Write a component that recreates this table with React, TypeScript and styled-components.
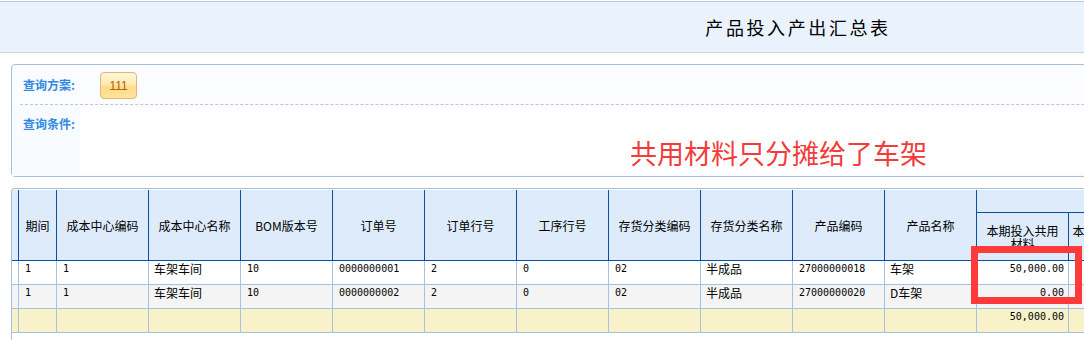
import styled, { createGlobalStyle } from 'styled-components';

type Column = {
  key: string,
  title: string,
  width: number,
  mono?: boolean,
  right?: boolean,
  pad?: number
}

const GlobalStyle = createGlobalStyle`
  * { box-sizing: border-box; }
  html, body {
    margin: 0;
    background: #fff;
    overflow: hidden;
  }
  body {
    font-family: "Noto Sans CJK SC", "DejaVu Sans", sans-serif;
    font-size: 12px;
    color: #000;
  }
`;

const Page = styled.div`
  width: 1596px;
  padding-top: 1px;
`;

const TitleBar = styled.div`
  height: 52px;
  border-top: 1px solid #b8c9dd;
  border-bottom: 1px solid #c8d3e1;
  background: #eaf2fd;
  display: flex;
  align-items: center;
  justify-content: center;
`;

const Title = styled.h1`
  margin: 0;
  font-size: 18px;
  font-weight: normal;
  letter-spacing: 2.6px;
  color: #000;
`;

const QueryPanel = styled.div`
  margin: 11px 0 0 11px;
  height: 113px;
  border: 1px solid #a8bfd8;
  border-radius: 4px 0 0 4px;
  background: #fafcff;
  display: flex;
  flex-direction: column;
`;

const SchemeRow = styled.div`
  height: 39px;
  display: flex;
  align-items: center;
  padding-left: 11px;
`;

const Label = styled.span`
  width: 77px;
  font-weight: bold;
  font-size: 12px;
  color: #338ae2;
`;

const SchemeButton = styled.button`
  width: 37px;
  height: 27px;
  margin-top: 2px;
  padding: 0;
  border: 1px solid #d9b97c;
  border-radius: 4px;
  background: linear-gradient(#fff6d6 0%, #ffeab0 45%, #ffdc88 55%, #ffe29c 100%);
  color: #b85c00;
  font-family: "Liberation Sans", sans-serif;
  font-size: 12px;
`;

const Divider = styled.div`
  margin-left: 8px;
  border-top: 1px dashed #c4c6ce;
`;

const ConditionRow = styled.div`
  flex: 1;
  display: flex;
`;

const ConditionLabel = styled.div`
  width: 68px;
  padding: 10px 0 0 11px;
  background: #f8fbff;
`;

const ConditionArea = styled.div`
  position: relative;
  flex: 1;
  margin: 3px 0 4px 0;
  background: #fff;
`;

const Annotation = styled.div`
  position: absolute;
  left: 550px;
  top: 30px;
  font-size: 27px;
  line-height: 30px;
  color: #f23c3c;
  white-space: nowrap;
`;

const TableBox = styled.div`
  position: relative;
  margin: 11px 0 0 11px;
  min-height: 160px;
  padding-top: 1px;
  border-top: 1px solid #a8c0dc;
  border-left: 1px solid #a8c0dc;
  border-top-left-radius: 4px;
`;

const Grid = styled.table`
  border-collapse: separate;
  border-spacing: 0;
  table-layout: fixed;
`;

const Col = styled.col<{ $w: number }>`
  width: ${p => p.$w}px;
`;

const Th = styled.th<{ $h?: number, $pad?: number }>`
  height: ${p => p.$h ?? 23}px;
  padding: 0 ${p => p.$pad ?? 3}px;
  background: #deebfb;
  border-right: 1px solid #0c4ea3;
  border-bottom: 1px solid #0c4ea3;
  font-weight: normal;
  font-size: 12px;
  line-height: 13px;
  text-align: center;
  vertical-align: middle;
  overflow: hidden;
`;

const Tr = styled.tr<{ $bg: string }>`
  background: ${p => p.$bg};
`;

const Td = styled.td<{ $mono?: boolean, $right?: boolean }>`
  height: 24px;
  padding: 0 ${p => (p.$right ? 4 : 5)}px 0 ${p => (p.$mono ? 6 : 5)}px;
  border-right: 1px solid #a9c0e0;
  border-bottom: 1px solid #a9c0e0;
  vertical-align: top;
  line-height: 16px;
  white-space: nowrap;
  overflow: hidden;
  text-align: ${p => (p.$right ? 'right' : 'left')};
  font-family: ${p => (p.$mono ? '"DejaVu Sans Mono", monospace' : '"Noto Sans CJK SC", sans-serif')};
  font-size: ${p => (p.$mono ? 10 : 12)}px;
`;

const MarkerCell = styled.td`
  padding: 0;
  border-right: 1px solid #a9c0e0;
  border-bottom: 1px solid #a9c0e0;
`;

const MarkerHead = styled.th`
  padding: 0;
  background: #deebfb;
  border-right: 1px solid #0c4ea3;
  border-bottom: 1px solid #0c4ea3;
`;

const Highlight = styled.div`
  position: absolute;
  left: 959px;
  top: 57px;
  width: 111px;
  height: 58px;
  border: 7px solid #ff3a3a;
  pointer-events: none;
`;

const columns: Column[] = [
  { key: 'period', title: '期间', width: 38, mono: true },
  { key: 'ccCode', title: '成本中心编码', width: 92, mono: true },
  { key: 'ccName', title: '成本中心名称', width: 92 },
  { key: 'bom', title: 'BOM版本号', width: 92, mono: true },
  { key: 'order', title: '订单号', width: 92, mono: true },
  { key: 'orderLine', title: '订单行号', width: 92, mono: true },
  { key: 'process', title: '工序行号', width: 92, mono: true },
  { key: 'catCode', title: '存货分类编码', width: 92, mono: true },
  { key: 'catName', title: '存货分类名称', width: 92 },
  { key: 'prodCode', title: '产品编码', width: 92, mono: true },
  { key: 'prodName', title: '产品名称', width: 92 },
];

const groupColumns: Column[] = [
  { key: 'shared', title: '本期投入共用材料', width: 92, mono: true, right: true, pad: 8 },
  { key: 'direct', title: '本期投入直接材料费', width: 92, mono: true, right: true },
  { key: 'total', title: '本期投入合计', width: 92, mono: true, right: true },
];

const rows: Record<string, string>[] = [
  { period: '1', ccCode: '1', ccName: '车架车间', bom: '10', order: '0000000001', orderLine: '2', process: '0', catCode: '02', catName: '半成品', prodCode: '27000000018', prodName: '车架', shared: '50,000.00', direct: '', total: '' },
  { period: '1', ccCode: '1', ccName: '车架车间', bom: '10', order: '0000000002', orderLine: '2', process: '0', catCode: '02', catName: '半成品', prodCode: '27000000020', prodName: 'D车架', shared: '0.00', direct: '', total: '' },
];

const totals: Record<string, string> = { shared: '50,000.00' };

const allColumns = [...columns, ...groupColumns];

export default function App() {
  return (
    <Page>
      <GlobalStyle />
      <TitleBar>
        <Title>产品投入产出汇总表</Title>
      </TitleBar>

      <QueryPanel>
        <SchemeRow>
          <Label>查询方案:</Label>
          <SchemeButton>111</SchemeButton>
        </SchemeRow>
        <Divider />
        <ConditionRow>
          <ConditionLabel>
            <Label>查询条件:</Label>
          </ConditionLabel>
          <ConditionArea>
            <Annotation>共用材料只分摊给了车架</Annotation>
          </ConditionArea>
        </ConditionRow>
      </QueryPanel>

      <TableBox>
        <Grid>
          <colgroup>
            <Col $w={7} />
            {allColumns.map(c => <Col key={c.key} $w={c.width} />)}
          </colgroup>
          <thead>
            <tr>
              <MarkerHead rowSpan={2} />
              {columns.map(c => (
                <Th key={c.key} rowSpan={2} $h={71}>{c.title}</Th>
              ))}
              <Th colSpan={3}>本期投入</Th>
            </tr>
            <tr>
              {groupColumns.map(c => (
                <Th key={c.key} $h={48} $pad={c.pad}>{c.title}</Th>
              ))}
            </tr>
          </thead>
          <tbody>
            {rows.map((r, i) => (
              <Tr key={i} $bg={i % 2 === 0 ? '#ffffff' : '#f4f4f4'}>
                <MarkerCell />
                {allColumns.map(c => (
                  <Td key={c.key} $mono={c.mono} $right={c.right}>{r[c.key]}</Td>
                ))}
              </Tr>
            ))}
            <Tr $bg="#f8f2c9">
              <MarkerCell />
              {allColumns.map(c => (
                <Td key={c.key} $mono={c.mono} $right={c.right}>{totals[c.key] ?? ''}</Td>
              ))}
            </Tr>
          </tbody>
        </Grid>
        <Highlight />
      </TableBox>
    </Page>
  );
}
